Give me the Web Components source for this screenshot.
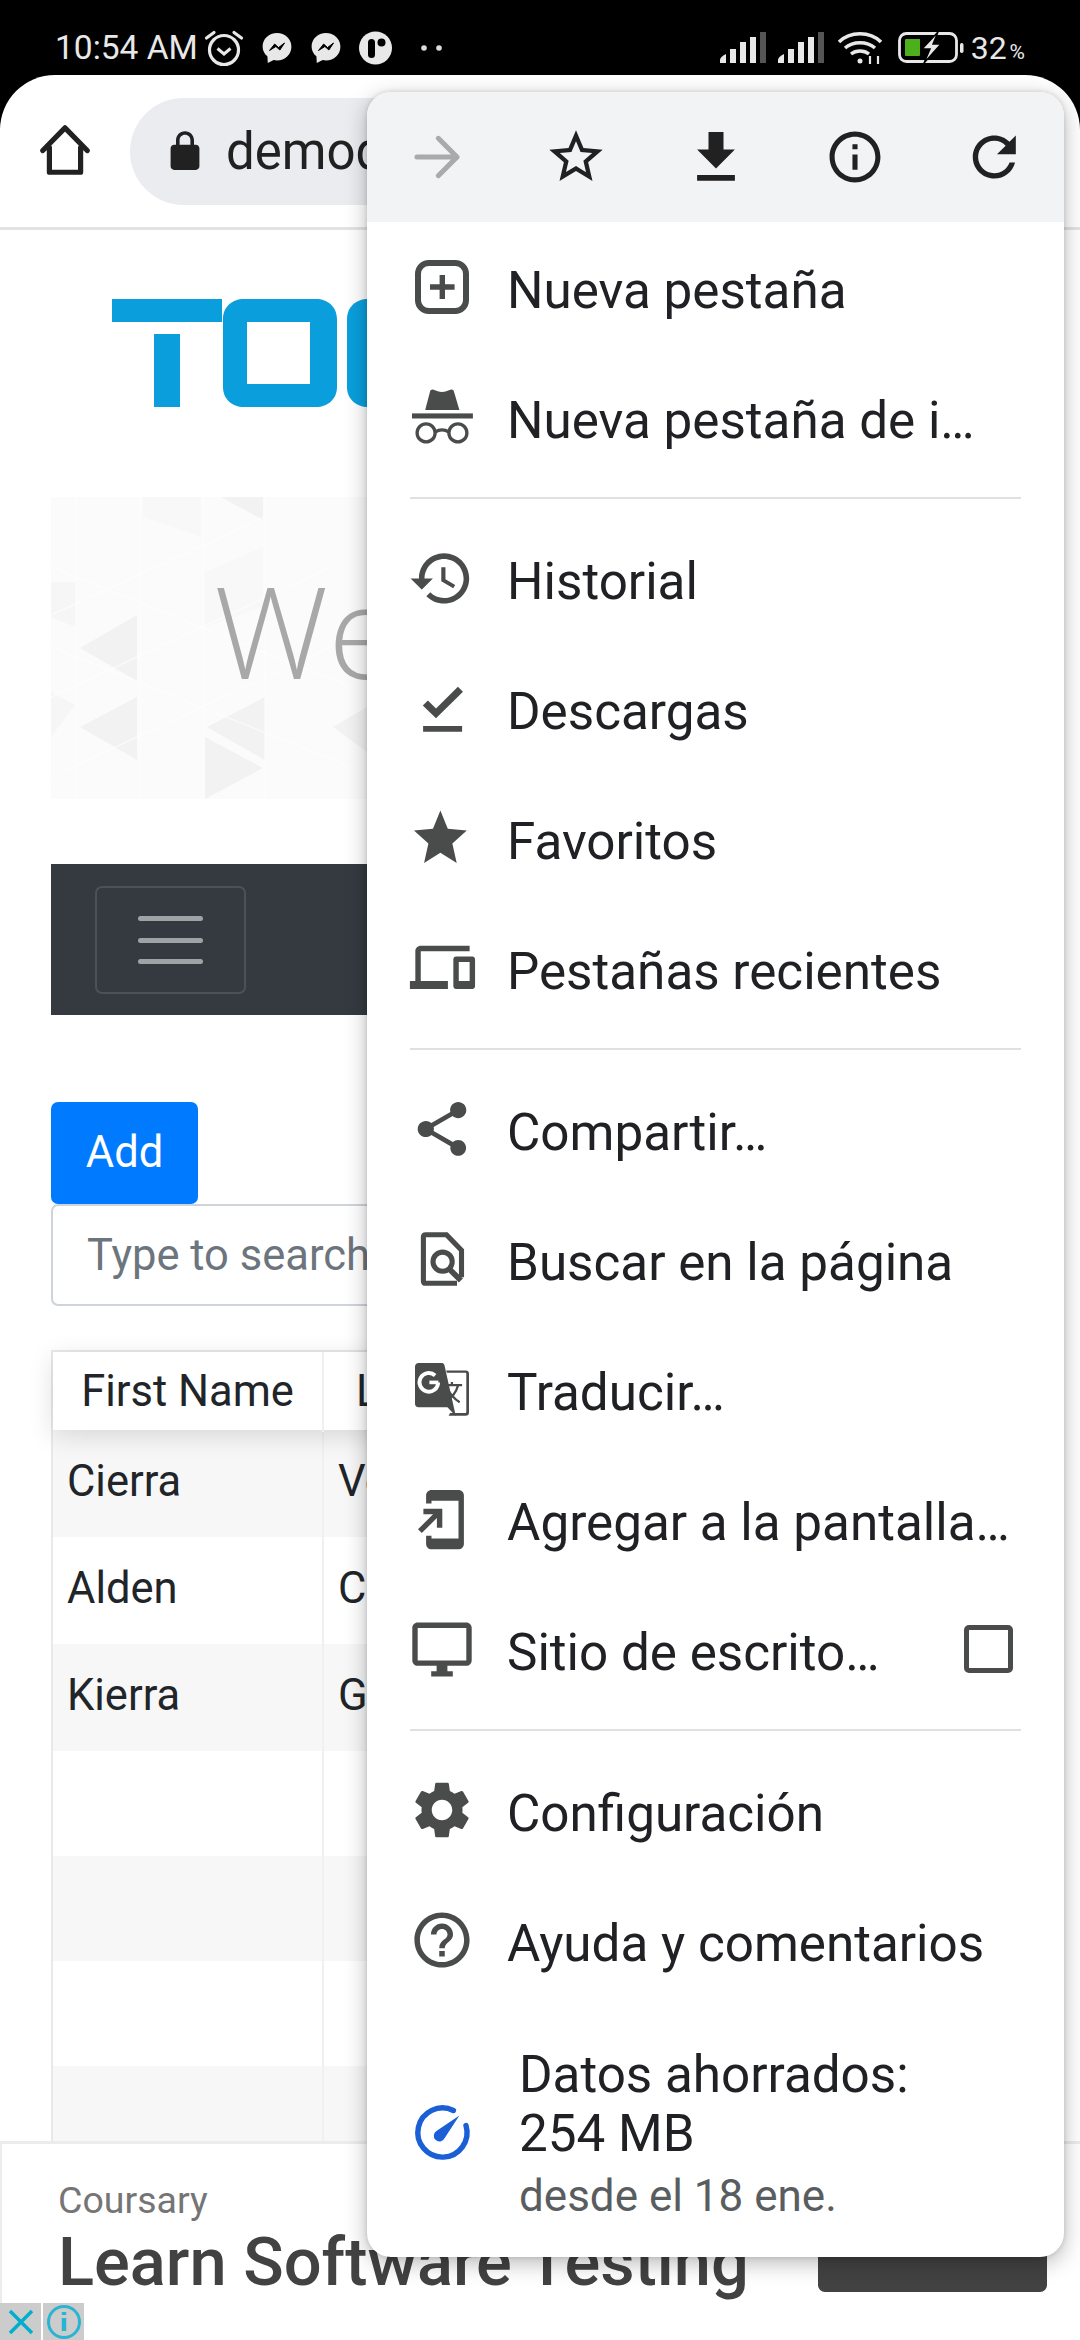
<!DOCTYPE html>
<html lang="es">
<head>
<meta charset="utf-8">
<title>Chrome menu</title>
<style>
  html, body { margin: 0; padding: 0; }
  body { position: relative; width: 1080px; height: 2340px; overflow: hidden; background: #000; font-family: Roboto, "Noto Sans", sans-serif; }
</style>
</head>
<body>
<status-bar></status-bar>
<browser-toolbar url="demoq"></browser-toolbar>
<page-content></page-content>
<ad-banner></ad-banner>
<overflow-menu>
  <menu-group first>
    <menu-row icon="newtab">Nueva pestaña</menu-row>
    <menu-row icon="incognito">Nueva pestaña de i…</menu-row>
  </menu-group>
  <menu-group>
    <menu-row icon="history">Historial</menu-row>
    <menu-row icon="downloads">Descargas</menu-row>
    <menu-row icon="star">Favoritos</menu-row>
    <menu-row icon="devices">Pestañas recientes</menu-row>
  </menu-group>
  <menu-group>
    <menu-row icon="share">Compartir…</menu-row>
    <menu-row icon="find">Buscar en la página</menu-row>
    <menu-row icon="translate">Traducir…</menu-row>
    <menu-row icon="addhome">Agregar a la pantalla…</menu-row>
    <menu-row icon="desktop" checkbox>Sitio de escrito…</menu-row>
  </menu-group>
  <menu-group last>
    <menu-row icon="settings">Configuración</menu-row>
    <menu-row icon="help">Ayuda y comentarios</menu-row>
  </menu-group>
  <data-saver></data-saver>
</overflow-menu>

<script>
// material-ish icon paths, all on a 24 unit box
const ICONS = {
  newtab: `<rect x="4" y="4" width="16" height="16" rx="3.6" fill="none" stroke="currentColor" stroke-width="2"/><path d="M11.2 8h1.8v3.1h3.2v1.8H13V16h-1.8v-3.1H8v-1.8h3.2z"/>`,
  incognito: `<path d="M6.4 9.7 8 3.6c.1-.6.6-.9 1.2-.7l1.4.5c.9.3 1.9.3 2.8 0l1.4-.5c.6-.2 1.100.1 1.200.7l1.800 6.100z"/><rect x="2" y="10.800" width="20.300" height="1.700"/><g fill="none" stroke="currentColor" stroke-width="1.100"><circle cx="6.700" cy="17.300" r="3"/><circle cx="17.300" cy="17.300" r="3"/><path d="M9.700 17c1.500-.9 3.100-.9 4.600 0"/></g>`,
  history: `<path d="M13 3c-4.970 0-9 4.030-9 9H1l3.890 3.890.07.14L9 12H6c0-3.870 3.130-7 7-7s7 3.130 7 7-3.130 7-7 7c-1.930 0-3.680-.79-4.940-2.060l-1.420 1.420C8.270 19.990 10.510 21 13 21c4.970 0 9-4.030 9-9s-4.030-9-9-9zm-1 5v5l4.280 2.540.72-1.210-3.500-2.080V8H12z" transform="translate(.6 1) scale(.93)"/>`,
  downloads: `<path d="M5.700 18h13v1.900h-13zM10 15.400 5.600 11.200 7.300 9.500 10 12.200 17.300 4.900 19 6.600z"/>`,
  star: `<path d="M12 17.270 18.180 21l-1.640-7.030L22 9.240l-7.190-.61L12 2 9.190 8.630 2 9.240l5.460 4.730L5.820 21z" transform="translate(.9 1) scale(.88 .92)"/>`,
  devices: `<g transform="translate(1.300 1) scale(.905 .9)"><path d="M4 6h18V4H4c-1.100 0-2 .9-2 2v11H0v3h14v-3H4V6zm19 2h-6c-.55 0-1 .45-1 1v10c0 .55.45 1 1 1h6c.55 0 1-.45 1-1V9c0-.55-.45-1-1-1zm-1 9h-4v-7h4v7z"/></g>`,
  share: `<path transform="translate(1.200 1.200) scale(.9)" d="M18 16.080c-.76 0-1.440.3-1.960.77L8.910 12.700c.05-.23.09-.46.09-.7s-.04-.47-.09-.7l7.050-4.110c.54.5 1.250.81 2.040.81 1.660 0 3-1.340 3-3s-1.340-3-3-3-3 1.340-3 3c0 .24.04.47.09.7L8.040 9.810C7.500 9.310 6.790 9 6 9c-1.660 0-3 1.340-3 3s1.340 3 3 3c.79 0 1.500-.31 2.040-.81l7.120 4.160c-.05.21-.08.43-.08.65 0 1.610 1.310 2.920 2.920 2.920s2.920-1.310 2.920-2.920-1.310-2.920-2.920-2.920z"/>`,
  find: `<g fill="none" stroke="currentColor"><path stroke-width="1.700" d="M17 20.100H6.600c-.5 0-.8-.3-.8-.8V4.700c0-.5.3-.8.8-.8h6.900l5 5.200v9"/><circle cx="12.200" cy="12.900" r="3.200" stroke-width="1.700"/><path stroke-width="1.900" d="m14.600 15.500 3.700 3.700"/></g>`,
  translate: `<path d="M4.200 3.300h7.600c.5 0 .9.2 1 .7L16.600 21l-2.800-2.900H4.200c-.7 0-1.200-.5-1.200-1.200V4.500c0-.7.500-1.200 1.200-1.200z"/><path d="M13.400 5.800h6.500c.7 0 1.100.4 1.100 1.100v12.900c0 .7-.4 1.100-1.100 1.100h-5.700l.5-.9h5c.3 0 .4-.1.4-.4V7c0-.3-.1-.4-.4-.4h-6.100z"/><path d="M10.700 9.800a3.100 3.100 0 1 1-1-2.300" fill="none" stroke="#fff" stroke-width="1.300"/><rect x="7.800" y="9.200" width="3" height="1.200" fill="#fff"/><path d="M12.500 10.700h6.200M15.300 9.700v1M17.400 10.700c-.7 2.500-2.300 4.400-4.300 5.300M13.800 11.800c.9 1.900 2.400 3.500 4.100 4.600" fill="none" stroke="currentColor" stroke-width=".75"/>`,
  addhome: `<path transform="translate(1.300 1.400) scale(.9)" d="M18 1.010 8 1c-1.100 0-2 .9-2 2v3h2V5h10v14H8v-1H6v3c0 1.100.9 2 2 2h10c1.100 0 2-.9 2-2V3c0-1.100-.9-1.990-2-1.990zM10 15h2V8H5v2h3.590L3 15.590 4.410 17 10 11.410V15z"/>`,
  desktop: `<path transform="translate(1.200 1.400) scale(.9)" d="M21 2H3c-1.100 0-2 .9-2 2v12c0 1.100.9 2 2 2h7v2H8v2h8v-2h-2v-2h7c1.100 0 2-.9 2-2V4c0-1.100-.9-2-2-2zm0 14H3V4h18v12z"/>`,
  settings: `<path d="M19.140 12.940c.04-.3.06-.61.06-.94 0-.32-.02-.64-.07-.94l2.030-1.580c.18-.14.23-.41.12-.61l-1.920-3.320c-.12-.22-.37-.29-.59-.22l-2.390.96c-.5-.38-1.030-.7-1.620-.94L14.400 2.810c-.04-.24-.24-.41-.48-.41h-3.840c-.24 0-.43.17-.47.41L9.250 5.350C8.660 5.590 8.120 5.920 7.630 6.290L5.240 5.330c-.22-.08-.47 0-.59.22L2.740 8.870c-.12.21-.08.47.12.61l2.030 1.580c-.05.3-.09.63-.09.94s.02.64.07.94l-2.030 1.580c-.18.14-.23.41-.12.61l1.920 3.320c.12.22.37.29.59.22l2.390-.96c.5.38 1.030.7 1.620.94l.36 2.540c.05.24.24.41.48.41h3.840c.24 0 .44-.17.47-.41l.36-2.540c.59-.24 1.130-.56 1.620-.94l2.390.96c.22.08.47 0 .59-.22l1.920-3.320c.12-.22.07-.47-.12-.61l-2.010-1.580zM12 15.600c-1.980 0-3.600-1.620-3.600-3.600s1.620-3.600 3.600-3.600 3.600 1.620 3.600 3.600-1.620 3.600-3.600 3.600z" transform="translate(.6 .6) scale(.95)"/>`,
  help: `<path transform="translate(.96 .96) scale(.92)" d="M11 18h2v-2h-2v2zm1-16C6.480 2 2 6.480 2 12s4.480 10 10 10 10-4.480 10-10S17.520 2 12 2zm0 18c-4.410 0-8-3.590-8-8s3.590-8 8-8 8 3.590 8 8-3.590 8-8 8zm0-14c-2.210 0-4 1.790-4 4h2c0-1.100.9-2 2-2s2 .9 2 2c0 2-3 1.750-3 5h2c0-2.250 3-2.500 3-5 0-2.210-1.790-4-4-4z"/>`,
  arrow: `<path d="M4.500 12h15M12.500 5l7 7-7 7" fill="none" stroke="currentColor" stroke-width="1.900" stroke-linecap="round" stroke-linejoin="round"/>`,
  starOutline: `<path d="M22 9.240l-7.190-.62L12 2 9.190 8.630 2 9.240l5.460 4.730L5.820 21 12 17.270 18.180 21l-1.630-7.030L22 9.240zM12 15.400l-3.760 2.270 1-4.280-3.320-2.880 4.380-.38L12 6.100l1.710 4.040 4.380.38-3.320 2.880 1 4.280L12 15.400z"/>`,
  download: `<path d="M18.300 9.500h-3.800V3.700h-5v5.800H5.700l6.300 6.300zM5.700 18h12.600v1.900H5.700z"/>`,
  info: `<path transform="translate(.9 .9) scale(.925)" d="M11 7h2v2h-2zm0 4h2v6h-2zm1-9C6.480 2 2 6.480 2 12s4.480 10 10 10 10-4.480 10-10S17.520 2 12 2zm0 18c-4.410 0-8-3.590-8-8s3.590-8 8-8 8 3.590 8 8-3.590 8-8 8z"/>`,
  refresh: `<path d="M17.650 6.350C16.200 4.900 14.210 4 12 4c-4.420 0-7.990 3.580-7.990 8s3.570 8 7.990 8c3.730 0 6.840-2.550 7.730-6h-2.080c-.82 2.330-3.040 4-5.650 4-3.310 0-6-2.690-6-6s2.690-6 6-6c1.660 0 3.140.69 4.220 1.780L13 11h7V4l-2.350 2.350z" transform="translate(.7 .6) scale(.95)"/>`
};

function define(name, html) {
  customElements.define(name, class extends HTMLElement {
    constructor() {
      super();
      this.attachShadow({ mode: 'open' });
      this.shadowRoot.innerHTML = typeof html === 'function' ? html(this) : html;
    }
  });
}

// phone status bar, icons laid out left and right of a spacer
define('status-bar', `
  <style>
    :host { display: flex; align-items: center; height: 75px; padding: 20px 55px 0; color: #e8e8e8; font: 400 33.500px Roboto, sans-serif; box-sizing: border-box; }
    svg { display: block; flex: none; }
    .time { width: 143px; white-space: nowrap; }
    .pct { font-size: 32px; margin-left: 7px; white-space: nowrap; }
    .pct small { font-size: 21px; margin-left: 3px; }
    .spacer { flex: 1; }
  </style>
  <span class="time">10:54 AM</span>
  <svg width="42" height="38" viewBox="0 0 42 38" style="margin-left:5px" fill="none" stroke="#e8e8e8">
    <circle cx="21" cy="21" r="14.500" stroke-width="3.200"/>
    <path d="M14.500 19.500 21 25l6.500-5.500" stroke-width="3"/>
    <path d="M3.500 9 11 3.500M38.500 9 31 3.500" stroke-width="3.200" stroke-linecap="round"/>
  </svg>
  <svg width="30" height="32" viewBox="0 0 30 32" style="margin-left:17px"><path fill="#e8e8e8" d="M15 1C7 1 .6 6.900.6 14.400c0 4 1.900 7.500 4.800 9.900L5.800 31l5.900-3c1.100.3 2.200.5 3.300.5 8 0 14.400-6 14.400-13.800S23 1 15 1z"/><path d="M7.500 18.500 12.700 12l3.800 3.600L22.500 11l-4.600 7-4-3.500z" fill="#000" stroke="#000"/></svg>
  <svg width="30" height="32" viewBox="0 0 30 32" style="margin-left:19px"><path fill="#e8e8e8" d="M15 1C7 1 .6 6.900.6 14.400c0 4 1.900 7.500 4.800 9.900L5.800 31l5.900-3c1.100.3 2.200.5 3.300.5 8 0 14.400-6 14.400-13.800S23 1 15 1z"/><path d="M7.500 18.500 12.700 12l3.800 3.600L22.500 11l-4.600 7-4-3.500z" fill="#000" stroke="#000"/></svg>
  <svg width="33" height="34" viewBox="0 0 33 34" style="margin-left:18px"><circle cx="16.500" cy="17" r="16.500" fill="#e8e8e8"/><rect x="9" y="8" width="7" height="19" rx="3.500" fill="#000"/><circle cx="22.500" cy="11.500" r="4" fill="#000"/></svg>
  <svg width="24" height="8" viewBox="0 0 24 8" style="margin-left:28px"><circle cx="4" cy="4" r="2.800" fill="#ddd"/><circle cx="19" cy="4" r="2.800" fill="#ddd"/></svg>
  <span class="spacer"></span>
  <svg width="46" height="32" viewBox="0 0 46 32"><g fill="#e8e8e8"><path d="M0 31v-3c0-2 2-4 6-6v9z"/><rect x="10" y="17" width="6" height="14"/><rect x="20" y="10" width="6" height="21"/><rect x="30" y="5" width="6" height="26"/></g><rect x="40" y="0" width="6" height="31" fill="#555"/></svg>
  <svg width="46" height="32" viewBox="0 0 46 32" style="margin-left:12px"><g fill="#e8e8e8"><path d="M0 31v-3c0-2 2-4 6-6v9z"/><rect x="10" y="17" width="6" height="14"/><rect x="20" y="10" width="6" height="21"/><rect x="30" y="5" width="6" height="26"/></g><rect x="40" y="0" width="6" height="31" fill="#555"/></svg>
  <svg width="46" height="36" viewBox="0 0 46 36" style="margin-left:13px" fill="none" stroke="#e8e8e8" stroke-width="3.500"><path d="M2 12C13 1 33 1 44 12"/><path d="M8 18c8-7 22-7 30 0"/><path d="M14 24c5-4 13-4 18 0"/><circle cx="23" cy="31" r="2.500" fill="#e8e8e8" stroke="none"/><path d="M33 26v8M41 26v8" stroke-width="2.200"/></svg>
  <svg width="66" height="32" viewBox="0 0 66 32" style="margin-left:15px">
    <rect x="1.500" y="1.500" width="57" height="28" rx="7" fill="none" stroke="#e8e8e8" stroke-width="2.800"/>
    <rect x="7" y="7" width="15" height="17" rx="1" fill="#4caf1c"/>
    <path d="M21 7h1v8l-5 3h4v6h-1z" fill="#4caf1c"/>
    <path d="M40 0 24 17h8l-6 14 17-19h-8l5-12z" fill="#e8e8e8" stroke="#000" stroke-width="1.500"/>
    <rect x="62" y="11" width="3.500" height="10" rx="1.700" fill="#e8e8e8"/>
  </svg>
  <span class="pct">32<small>%</small></span>
`);

define('browser-toolbar', el => `
  <style>
    :host { display: flex; align-items: center; box-sizing: border-box; height: 155px; padding: 0 0 0 39px; background: #fff; border-radius: 55px 55px 0 0; border-bottom: 3px solid #e3e3e3; color: #212121; }
    svg { display: block; flex: none; }
    .pill { display: flex; align-items: center; flex: 1; height: 107px; margin: 0 16px 0 39px; border-radius: 54px; background: #ebecf0; padding-left: 37px; font: 400 51px Roboto, sans-serif; }
    .lock { margin-right: 23px; }
  </style>
  <svg width="52" height="52" viewBox="0 0 55 55" fill="none" stroke="#212121" stroke-width="5.500" stroke-linejoin="round" stroke-linecap="round"><path d="M4 27 27.500 3 51 27M11 24v26h33V24"/></svg>
  <div class="pill">
    <svg class="lock" width="36" height="42" viewBox="2 1 20 23" fill="#212121"><path d="M18 9h-1V6.500C17 3.700 14.800 1.500 12 1.500S7 3.700 7 6.500V9H6c-1.100 0-2 .9-2 2v10c0 1.100.9 2 2 2h12c1.100 0 2-.9 2-2V11c0-1.100-.9-2-2-2zM15 9H9V6.500c0-1.700 1.300-3 3-3s3 1.300 3 3z"/></svg>
    <span>${el.getAttribute('url')}</span>
  </div>
`);

define('tool-logo', `
  <style>:host { display: block; height: 267px; } svg { display: block; }</style>
  <svg width="1080" height="267" viewBox="0 230 1080 267" fill="#0a9fdc">
    <rect x="112" y="299" width="110" height="23"/>
    <rect x="154" y="334" width="26" height="73"/>
    <path fill-rule="evenodd" d="M244 299h72c12 0 21 8 21 20v68c0 12-9 20-21 20h-72c-12 0-21-8-21-20v-68c0-12 9-20 21-20zm3 23v62h63v-62z"/>
    <path d="M368 299c-12 0-21 8-21 20v68c0 12 9 20 21 20h40v-108z"/>
  </svg>
`);

define('hero-banner', `
  <style>
    :host { display: block; position: relative; height: 302px; background: #fbfbfb; overflow: hidden; }
    svg { position: absolute; left: 0; top: 0; }
    span { position: relative; display: block; padding: 50px 0 0 163px; font: 300 128px/1.300 "Open Sans", sans-serif; color: #a8a8a8; }
  </style>
  <svg width="978" height="302" viewBox="0 0 978 302">
    <g fill="#f2f2f2">
      <path d="M29 151 86 118V184zM29 230 86 200V263zM156 230 214 200V263zM170 0H212V23zM154 240 212 271 154 302zM282 230 316 210V255z"/>
      <path d="M0 85H25V130L0 120zM0 195 24 208 0 240z" fill="#f6f6f6"/>
      <path d="M92 0H150V40L92 20zM154 75 212 50V110L154 130z" fill="#f8f8f8"/>
    </g>
    <g stroke="#fff" stroke-width="1.500" fill="none" opacity=".6">
      <path d="M0 118 214 20M0 200 280 70M0 280 280 150M0 70 300 190M0 150 300 270"/>
      <path d="M25 0V302M89 0V302M152 0V302M214 0V302"/>
    </g>
  </svg>
  <span>We</span>
`);

define('nav-bar', `
  <style>
    :host { display: block; box-sizing: border-box; height: 151px; padding: 22px 44px; background: #343a40; }
    .toggler { display: flex; flex-direction: column; justify-content: center; align-items: center; gap: 16.500px; box-sizing: border-box; width: 151px; height: 108px; border: 2px solid #4c5157; border-radius: 7px; }
    i { display: block; width: 65px; height: 5px; border-radius: 3px; background: #a0a3a6; }
  </style>
  <div class="toggler"><i></i><i></i><i></i></div>
`);

define('search-tools', `
  <style>
    :host { display: block; font: 400 43.500px Roboto, sans-serif; }
    .add { box-sizing: border-box; width: 147px; height: 102px; line-height: 102px; text-align: center; color: #fff; background: #007bff; border-radius: 7px; }
    .search { box-sizing: border-box; height: 102px; line-height: 100px; padding-left: 34px; color: #6c757d; background: #fff; border: 2px solid #ced4da; border-radius: 7px; }
  </style>
  <div class="add">Add</div>
  <div class="search">Type to search</div>
`);

// rows of the table behind the menu, empty ones stay striped
define('web-table', () => {
  const rows = [['Cierra', 'Ve'], ['Alden', 'Ca'], ['Kierra', 'Ge'], ['', ''], ['', ''], ['', ''], ['', '']];
  const body = rows.map((r, i) => `<div class="row ${i % 2 ? '' : 'odd'}"><div class="cell">${r[0]}</div><div class="cell">${r[1]}</div></div>`).join('');
  return `
  <style>
    :host { display: block; border-left: 2px solid #e9e9e9; border-top: 2px solid #e9e9e9; font: 400 43.500px Roboto, sans-serif; color: #212529; }
    .head { position: relative; z-index: 1; display: grid; grid-template-columns: 271px 1fr; height: 78px; line-height: 80px; background: #fff; box-shadow: 0 6px 26px rgba(0,0,0,.13); }
    .head div { border-right: 2px solid #f0f0f0; text-align: center; box-sizing: border-box; }
    .head div + div { border: 0; text-align: left; padding-left: 32px; }
    .row { display: grid; grid-template-columns: 271px 1fr; height: 105px; line-height: 103px; }
    .row:nth-child(-n+5) { height: 107px; line-height: 104px; }
    .row.odd { background: #f7f7f7; }
    .cell { padding-left: 14px; border-right: 2px solid #f0f0f0; box-sizing: border-box; }
    .cell + .cell { border: 0; padding-left: 14px; }
  </style>
  <div class="head"><div>First Name</div><div>L</div></div>
  ${body}`;
});

define('page-content', `
  <style>
    :host { display: block; height: 2110px; background: #fff; overflow: hidden; }
    .col { display: flex; flex-direction: column; width: 978px; margin-left: 51px; }
    nav-bar { margin-top: 65px; }
    search-tools { margin-top: 87px; }
    web-table { margin-top: 44px; }
  </style>
  <tool-logo></tool-logo>
  <div class="col">
    <hero-banner></hero-banner>
    <nav-bar></nav-bar>
    <search-tools></search-tools>
    <web-table></web-table>
  </div>
`);

define('ad-banner', `
  <style>
    :host { position: absolute; z-index: 2; left: 0; top: 2141px; width: 1080px; height: 199px; box-sizing: border-box; display: flex; background: #fff; border-top: 3px solid #ececec; border-left: 2px solid #ececec; }
    .copy { padding: 34px 0 0 56px; white-space: nowrap; }
    .brand { font: 400 37.500px/44px Roboto, sans-serif; color: #757575; }
    .title { font: 500 66.800px/80px Roboto, sans-serif; color: #424242; margin-top: 0; }
    .cta { width: 229px; height: 90px; margin: 58px 0 0 auto; margin-right: 33px; border-radius: 7px; background: #424242; }
    .choices { position: absolute; left: -2px; bottom: 0; display: flex; gap: 2px; }
    .choices div { display: flex; align-items: center; justify-content: center; width: 41px; height: 37px; background: #ccc; }
  </style>
  <div class="copy">
    <div class="brand">Coursary</div>
    <div class="title">Learn Software Testing</div>
  </div>
  <div class="cta"></div>
  <div class="choices">
    <div><svg width="28" height="28" viewBox="0 0 28 28" stroke="#00aecd" stroke-width="3.500"><path d="M3 3 25 25M25 3 3 25"/></svg></div>
    <div><svg width="36" height="36" viewBox="0 0 36 36" fill="none" stroke="#2ab4d4"><circle cx="18" cy="18" r="15.500" stroke-width="3"/><path d="M18 14v13" stroke-width="4.500"/><path d="M18 8v3" stroke-width="4.500"/></svg></div>
  </div>
`);

define('overflow-menu', () => {
  const btn = (name, size, color) => `<div class="cell" style="color:${color}"><svg width="${size}" height="${size}" viewBox="0 0 24 24" fill="currentColor">${ICONS[name]}</svg></div>`;
  return `
  <style>
    :host { position: absolute; z-index: 5; left: 367px; top: 92px; width: 697px; height: 2165px; background: #fff; border-radius: 24px; box-shadow: 0 6px 22px rgba(0,0,0,.28), 0 0 5px rgba(0,0,0,.14); font: 400 51.200px Roboto, sans-serif; color: #202124; }
    .head { display: flex; height: 130px; background: #f1f3f4; border-radius: 24px 24px 0 0; }
    .cell { flex: 1; display: flex; align-items: center; justify-content: center; color: #212121; }
    svg { display: block; }
  </style>
  <div class="head">
    ${btn('arrow', 64, '#aaaaaa')}${btn('starOutline', 64, '#212121')}${btn('download', 72, '#212121')}${btn('info', 66, '#212121')}${btn('refresh', 68, '#212121')}
  </div>
  <slot></slot>`;
});

define('menu-group', `
  <style>
    :host { display: block; padding: 17px 0 12px; border-bottom: 2.500px solid #e0e0e0; margin: 0 43px; }
    :host([first]) { padding-top: 3px; }
    :host([last]) { border-bottom: 0; padding-bottom: 0; }
    .wrap { margin: 0 -43px; }
  </style>
  <div class="wrap"><slot></slot></div>
`);

define('menu-row', el => `
  <style>
    :host { display: flex; align-items: center; height: 130px; padding-left: 39px; white-space: nowrap; color: #202124; }
    svg { display: block; flex: none; width: 72px; height: 72px; margin: -7px 29px 0 0; color: #4a4c4c; fill: #4a4c4c; }
    .box { box-sizing: border-box; width: 49px; height: 48px; margin: -7px 51px 0 auto; border: 5px solid #4a4c4c; border-radius: 5px; }
  </style>
  <svg viewBox="0 0 24 24">${ICONS[el.getAttribute('icon')]}</svg>
  <span><slot></slot></span>
  ${el.hasAttribute('checkbox') ? '<div class="box"></div>' : ''}
`);

define('data-saver', `
  <style>
    :host { display: flex; align-items: center; height: 250px; padding-left: 39px; font: 400 51.200px/59px Roboto, sans-serif; color: #202124; }
    svg { display: block; flex: none; margin-right: 41px; margin-top: -1px; }
    .text { margin-top: 8px; }
    .sub { font-size: 44px; line-height: 66px; color: #5a5d60; }
  </style>
  <svg width="72" height="72" viewBox="0 0 24 24" fill="none">
    <path d="M15.800 4.500A8.200 8.200 0 1 0 20 9.500" stroke="#1a5fd6" stroke-width="1.800" stroke-linecap="round"/>
    <path d="M17.800 6.200 10.400 11.200a1.900 1.900 0 1 0 2.500 2.500z" fill="#1a5fd6"/>
  </svg>
  <div class="text">
    <div>Datos ahorrados:<br>254 MB</div>
    <div class="sub">desde el 18 ene.</div>
  </div>
`);
</script>
</body>
</html>
